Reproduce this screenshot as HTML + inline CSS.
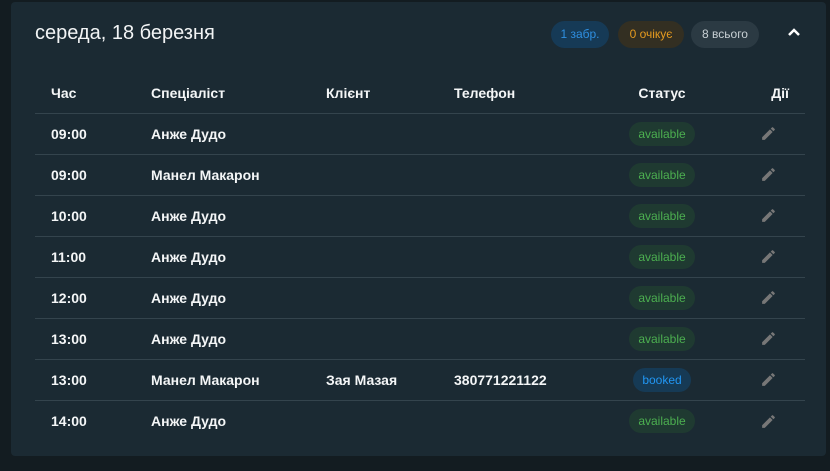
<!DOCTYPE html>
<html><head><meta charset="utf-8"><style>
*{margin:0;padding:0;box-sizing:border-box}
body{width:830px;height:471px;background:#131c21;font-family:"Liberation Sans",sans-serif;color:#fff;overflow:hidden;position:relative}
.card{position:absolute;left:11px;top:2px;width:815px;height:454px;background:#1b2a33;border-radius:4px}
.title{position:absolute;left:24px;top:20px;font-size:20px;color:#f2f4f5}
.badge{position:absolute;top:19px;height:27px;border-radius:14px;font-size:12px;line-height:27px;text-align:center}
table{position:absolute;left:24px;top:71px;width:770px;border-collapse:collapse;font-size:14px;table-layout:fixed}
td,th{height:41px;text-align:left;padding:0;font-weight:bold;color:#f4f6f7}
th{height:40px}
tr{border-bottom:1px solid #34444d}
tr:last-child{border-bottom:none}
.c1{padding-left:16px;width:116px}.c2{width:175px}.c3{width:128px}.c4{width:140px}.c6{width:75px}
.st{text-align:center}
.chip{display:inline-block;height:24px;line-height:24px;border-radius:12px;font-size:12px;padding:0 9px;font-weight:normal}
.av{background:#1f3a31;color:#4caf50}
.bk{background:#163a55;color:#2196f3}
td.a{text-align:right;padding-right:28px}
</style></head><body>
<div class="card">
<div class="title">середа, 18 березня</div>
<div class="badge" style="left:540px;width:58px;background:#163a56;color:#2f8fe0">1 забр.</div>
<div class="badge" style="left:607px;width:66px;background:#332f22;color:#e59a1f">0 очікує</div>
<div class="badge" style="left:680px;width:68px;background:#2b3a43;color:#c8d0d4">8 всього</div>
<svg style="position:absolute;left:776px;top:25px" width="14" height="10" viewBox="0 0 14 10"><path d="M2 8L7 3L12 8" stroke="#fff" stroke-width="2.5" fill="none"/></svg>
<table>
<tr><th class="c1">Час</th><th class="c2">Спеціаліст</th><th class="c3">Клієнт</th><th class="c4">Телефон</th><th class="st">Статус</th><th class="c6" style="text-align:right;padding-right:16px">Дії</th></tr>
<tr><td class="c1">09:00</td><td>Анже Дудо</td><td></td><td></td><td class="st"><span class="chip av">available</span></td><td class="a">P</td></tr>
<tr><td class="c1">09:00</td><td>Манел Макарон</td><td></td><td></td><td class="st"><span class="chip av">available</span></td><td class="a">P</td></tr>
<tr><td class="c1">10:00</td><td>Анже Дудо</td><td></td><td></td><td class="st"><span class="chip av">available</span></td><td class="a">P</td></tr>
<tr><td class="c1">11:00</td><td>Анже Дудо</td><td></td><td></td><td class="st"><span class="chip av">available</span></td><td class="a">P</td></tr>
<tr><td class="c1">12:00</td><td>Анже Дудо</td><td></td><td></td><td class="st"><span class="chip av">available</span></td><td class="a">P</td></tr>
<tr><td class="c1">13:00</td><td>Анже Дудо</td><td></td><td></td><td class="st"><span class="chip av">available</span></td><td class="a">P</td></tr>
<tr><td class="c1">13:00</td><td>Манел Макарон</td><td>Зая Мазая</td><td>380771221122</td><td class="st"><span class="chip bk">booked</span></td><td class="a">P</td></tr>
<tr><td class="c1">14:00</td><td>Анже Дудо</td><td></td><td></td><td class="st"><span class="chip av">available</span></td><td class="a">P</td></tr>
</table>
</div>
<script>
document.querySelectorAll('td.a').forEach(function(t){t.innerHTML='<svg width="17" height="17" viewBox="0 0 24 24" style="vertical-align:middle"><path fill="#777" d="M3 17.25V21h3.75L17.81 9.94l-3.75-3.75L3 17.25zM20.71 7.04a1 1 0 000-1.41l-2.34-2.34a1 1 0 00-1.41 0l-1.83 1.83 3.75 3.75 1.83-1.83z"/></svg>';});
</script>
</body></html>
